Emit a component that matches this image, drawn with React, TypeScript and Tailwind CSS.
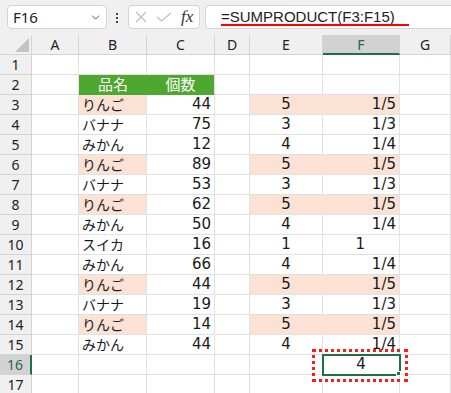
import { ChevronDown } from 'lucide-react';

type Row = [string, number, number, string];

const rows: Row[] = [
  ['りんご', 44, 5, '1/5'],
  ['バナナ', 75, 3, '1/3'],
  ['みかん', 12, 4, '1/4'],
  ['りんご', 89, 5, '1/5'],
  ['バナナ', 53, 3, '1/3'],
  ['りんご', 62, 5, '1/5'],
  ['みかん', 50, 4, '1/4'],
  ['スイカ', 16, 1, '1'],
  ['みかん', 66, 4, '1/4'],
  ['りんご', 44, 5, '1/5'],
  ['バナナ', 19, 3, '1/3'],
  ['りんご', 14, 5, '1/5'],
  ['みかん', 44, 4, '1/4'],
];

const jp = "font-['Noto_Sans_CJK_JP',sans-serif] text-[14px]";
const num = "font-['DejaVu_Sans',sans-serif] text-[15px]";
const cell = 'border-r border-b border-[#e1e1e1] flex items-center text-[#1a1a1a] overflow-visible whitespace-nowrap';
const rowHead =
  "bg-[#f0f0f0] border-r border-b border-[#d4d4d4] flex items-center justify-center text-[14px] text-[#222] font-['Noto_Sans',sans-serif]";
const colHead =
  "bg-[#f0f0f0] border-r border-b border-[#d4d4d4] flex items-center justify-center text-[14px] text-[#222] font-['Noto_Sans',sans-serif]";

function FormulaBar() {
  return (
    <div className="flex h-[35px] items-start bg-[#f0f0f0] pl-[7px] pt-[5px]">
      <div className="flex h-[24px] w-[100px] items-center justify-between rounded-[4px] border border-[#d4d4d4] bg-white pl-[5px] pr-[4px]">
        <span className="font-['Noto_Sans',sans-serif] text-[15px] text-[#222]">F16</span>
        <ChevronDown className="h-[13px] w-[13px] text-[#444]" strokeWidth={1.6} />
      </div>
      <div className="ml-[9px] mt-[8px] flex flex-col gap-[2px]">
        <span className="h-[2px] w-[2px] bg-[#444]" />
        <span className="h-[2px] w-[2px] bg-[#444]" />
        <span className="h-[2px] w-[2px] bg-[#444]" />
      </div>
      <div className="ml-[10px] flex h-[24px] w-[72px] items-center rounded-[4px] border border-[#d4d4d4] bg-white pl-[5px]">
        <svg width="12" height="12" viewBox="0 0 12 12" className="ml-[1px]">
          <path d="M1 1 L11 11 M11 1 L1 11" stroke="#bdbdbd" strokeWidth="1.1" fill="none" />
        </svg>
        <svg width="16" height="10" viewBox="0 0 16 10" className="ml-[9px]">
          <path d="M1 5 L5.5 9 L15 1" stroke="#bdbdbd" strokeWidth="1.1" fill="none" />
        </svg>
        <span className="ml-[9px] font-['Liberation_Serif',serif] text-[17px] italic text-[#333]">fx</span>
      </div>
      <div className="ml-[5px] flex h-[24px] flex-1 items-center rounded-l-[4px] border border-r-0 border-[#d4d4d4] bg-white pl-[15px]">
        <span className="relative font-['Liberation_Sans',sans-serif] text-[15px] text-[#222]">
          =SUMPRODUCT(F3:F15)
          <span className="absolute left-0 right-[-14px] top-[18px] h-[2px] bg-[#ff0000]" />
        </span>
      </div>
    </div>
  );
}

export default function App() {
  return (
    <div className="relative h-[393px] w-[451px] overflow-hidden bg-white">
      <FormulaBar />
      <div className="grid auto-rows-[20px] grid-cols-[32px_47px_68px_68px_35px_73px_77px_51px]">
        <div className="relative border-r border-b border-[#d4d4d4] bg-[#f0f0f0]">
          <svg width="14" height="14" viewBox="0 0 14 14" className="absolute bottom-[2px] right-[2px]">
            <path d="M14 0 L14 14 L0 14 Z" fill="#c4c4c4" />
          </svg>
        </div>
        <div className={colHead}>A</div>
        <div className={colHead}>B</div>
        <div className={colHead}>C</div>
        <div className={colHead}>D</div>
        <div className={colHead}>E</div>
        <div className="flex items-center justify-center border-r border-b-2 border-r-[#d4d4d4] border-b-[#1e7145] bg-[#d2d2d2] font-['Noto_Sans',sans-serif] text-[14px] text-[#1e6b44]">
          F
        </div>
        <div className={colHead}>G</div>

        {/* row 1 */}
        <div className={rowHead}>1</div>
        <div className={cell} />
        <div className={cell} />
        <div className={cell} />
        <div className={cell} />
        <div className={cell} />
        <div className={cell} />
        <div className={cell} />

        {/* row 2 header */}
        <div className={rowHead}>2</div>
        <div className={cell} />
        <div className="flex items-center justify-center border-b border-[#4ea72e] bg-[#4ea72e] font-['Noto_Sans_CJK_JP',sans-serif] text-[15px] text-white">
          品名
        </div>
        <div className="flex items-center justify-center border-r border-b border-r-[#e1e1e1] border-b-[#4ea72e] bg-[#4ea72e] font-['Noto_Sans_CJK_JP',sans-serif] text-[15px] text-white">
          個数
        </div>
        <div className={cell} />
        <div className={cell} />
        <div className={cell} />
        <div className={cell} />

        {rows.map(([name, qty, e, f], i) => {
          const hot = name === 'りんご';
          return [
            <div key={`h${i}`} className={rowHead}>
              {i + 3}
            </div>,
            <div key={`a${i}`} className={cell} />,
            <div key={`b${i}`} className={`${cell} ${jp} pl-[3px] ${hot ? 'bg-[#fbe2d5]' : ''}`}>
              {name}
            </div>,
            <div key={`c${i}`} className={`${cell} ${num} justify-end pr-[3px]`}>
              {qty}
            </div>,
            <div key={`d${i}`} className={cell} />,
            <div
              key={`e${i}`}
              className={`${cell} ${num} justify-center ${hot ? 'bg-[#fbe2d5] border-r-[#fbe2d5]' : ''}`}
            >
              {e}
            </div>,
            <div
              key={`f${i}`}
              className={`${cell} ${num} justify-end ${f === '1' ? 'pr-[34px]' : 'pr-[3px]'} ${hot ? 'bg-[#fbe2d5]' : ''}`}
            >
              {f}
            </div>,
            <div key={`g${i}`} className={cell} />,
          ];
        })}

        {/* row 16 */}
        <div className="flex items-center justify-center border-r-2 border-b border-r-[#1e7145] border-b-[#d4d4d4] bg-[#d2d2d2] font-['Noto_Sans',sans-serif] text-[14px] text-[#1e6b44]">
          16
        </div>
        <div className={cell} />
        <div className={cell} />
        <div className={cell} />
        <div className={cell} />
        <div className={cell} />
        <div className={`${cell} ${num} relative justify-center`}>
          4
          <span className="absolute left-[-1px] top-[-1px] h-[22px] w-[79px] border-2 border-[#1e7145]" />
          <span className="absolute bottom-[-2px] right-[-2px] h-[5px] w-[5px] border border-white bg-[#1e7145]" />
        </div>
        <div className={cell} />

        {/* row 17 */}
        <div className={rowHead}>17</div>
        <div className={cell} />
        <div className={cell} />
        <div className={cell} />
        <div className={cell} />
        <div className={cell} />
        <div className={cell} />
        <div className={cell} />
      </div>

      {/* annotation */}
      <div className="pointer-events-none absolute left-[312px] top-[349px] h-[33px] w-[96px] border-[3px] border-dotted border-[#ff1a1a]" />
    </div>
  );
}
